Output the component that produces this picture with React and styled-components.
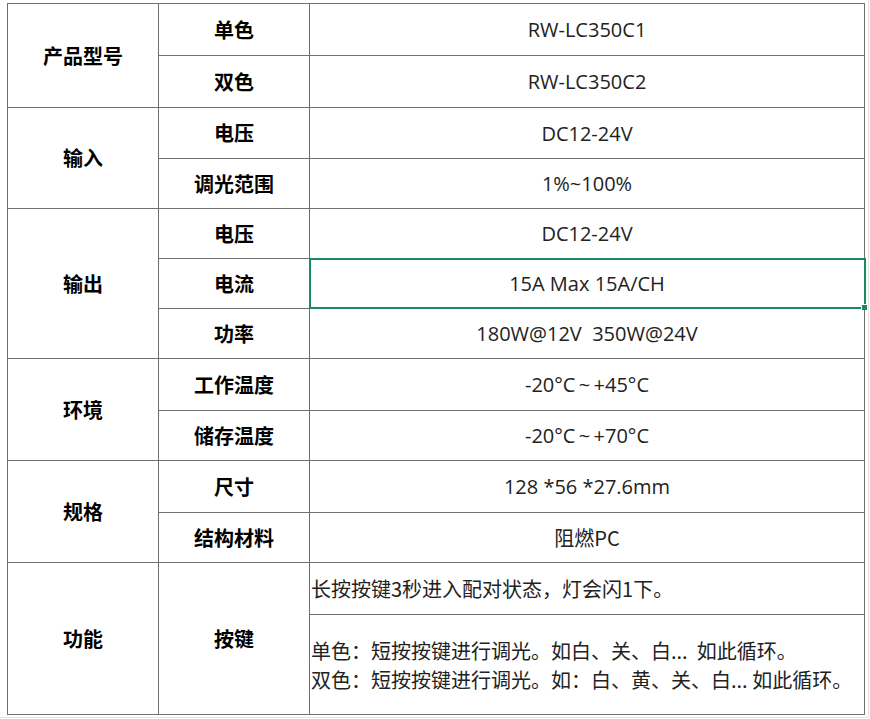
import React from "react";
import styled, { createGlobalStyle } from "styled-components";

const Global = createGlobalStyle`
  html, body { margin: 0; padding: 0; background: #ffffff; }
  body { font-family: "Open Sans", "Noto Sans CJK SC", sans-serif; color: #111; }
`;

const Page = styled.div`
  width: max-content;
  padding: 3px 3px 2px 7px;
  border-right: 1px solid #e3e3e3;
  border-bottom: 1px solid #e3e3e3;
`;

const Sheet = styled.div`
  display: grid;
  grid-template-columns: 151px 151px 555px;
  grid-template-rows: 52px 52px 51px 50px 50px 50px 50px 52px 50px 52px 50px 52px 100px;
  border-top: 1px solid #6f6f6f;
  border-left: 1px solid #6f6f6f;
  width: max-content;
`;

const Cell = styled.div`
  position: relative;
  box-sizing: border-box;
  border-right: 1px solid #6f6f6f;
  border-bottom: 1px solid #6f6f6f;
  display: flex;
  flex-direction: column;
  align-items: ${(p) => (p.$left ? "flex-start" : "center")};
  justify-content: center;
  padding: 0 ${(p) => (p.$left ? "1px" : "0")};
  grid-row: ${(p) => (p.$span ? `span ${p.$span}` : "auto")};
  white-space: pre;
`;

const Label = styled.span`
  font-family: "Noto Sans CJK SC", sans-serif;
  font-weight: 700;
  font-size: 20px;
  color: #000;
  line-height: 1.2;
`;

const Value = styled.span`
  font-family: "Open Sans", "Noto Sans CJK SC", sans-serif;
  font-weight: 400;
  font-size: 20px;
  color: #222;
  line-height: 29px;
`;

const CnValue = styled(Value)`
  font-family: "Noto Sans CJK SC", sans-serif;
  font-size: 20px;
  font-weight: 400;
`;

const Selection = styled.div`
  position: absolute;
  left: -1px;
  top: -1px;
  right: -2px;
  bottom: -1px;
  border: 2px solid #1b8a5c;
  pointer-events: none;
`;

const Handle = styled.div`
  position: absolute;
  right: -4px;
  bottom: -4px;
  width: 5px;
  height: 5px;
  background: #1b8a5c;
  border: 1px solid #fff;
`;

const groups = [
  { name: "产品型号", items: [["单色", "RW-LC350C1"], ["双色", "RW-LC350C2"]] },
  { name: "输入", items: [["电压", "DC12-24V"], ["调光范围", "1%~100%"]] },
  {
    name: "输出",
    items: [["电压", "DC12-24V"], ["电流", "15A Max 15A/CH", true], ["功率", "180W@12V  350W@24V"]],
  },
  { name: "环境", items: [["工作温度", "-20°C\u2009~\u2009+45°C"], ["储存温度", "-20°C\u2009~\u2009+70°C"]] },
  { name: "规格", items: [["尺寸", "128 *56 *27.6mm"], ["结构材料", "阻燃PC"]] },
];

const isCn = (s) => /[\u4e00-\u9fff]/.test(s);

export default function App() {
  return (
    <>
      <Global />
      <Page>
        <Sheet>
          {groups.map((g) => (
            <React.Fragment key={g.name}>
              <Cell $span={g.items.length}>
                <Label>{g.name}</Label>
              </Cell>
              {g.items.map(([k, v, sel]) => (
                <React.Fragment key={k + v}>
                  <Cell>
                    <Label>{k}</Label>
                  </Cell>
                  <Cell>
                    {isCn(v) ? <CnValue>{v}</CnValue> : <Value>{v}</Value>}
                    {sel && (
                      <Selection>
                        <Handle />
                      </Selection>
                    )}
                  </Cell>
                </React.Fragment>
              ))}
            </React.Fragment>
          ))}
          <Cell $span={2}>
            <Label>功能</Label>
          </Cell>
          <Cell $span={2}>
            <Label>按键</Label>
          </Cell>
          <Cell $left>
            <CnValue>长按按键3秒进入配对状态，灯会闪1下。</CnValue>
          </Cell>
          <Cell $left>
            <CnValue>单色：短按按键进行调光。如白、关、白...  如此循环。</CnValue>
            <CnValue>双色：短按按键进行调光。如：白、黄、关、白... 如此循环。</CnValue>
          </Cell>
        </Sheet>
      </Page>
    </>
  );
}
